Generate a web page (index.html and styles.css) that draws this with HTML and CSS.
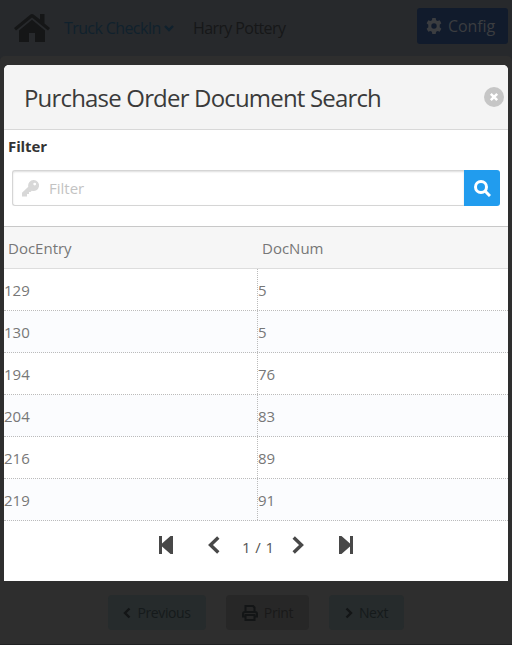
FILE: index.html
```html
<!DOCTYPE html>
<html lang="en">
<head>
<meta charset="utf-8">
<title>Truck CheckIn</title>
<link rel="stylesheet" href="styles.css">
</head>
<body>
<div class="page">
  <header class="topbar">
    <svg class="home" viewBox="0 0 36 28"><path d="M5 16.500 18 5.800l13 10.700V28H21v-9h-6v9H5z"/><path d="M0 14 16.500.6q1.500-1.100 3 0L26 5.500V0h4.500v9.500L36 14l-2 2.500L18 3.500 2 16.500z"/></svg>
    <a class="crumb">Truck CheckIn</a>
    <svg class="caret" viewBox="0 0 10 7"><path d="M1 1l4 4 4-4"/></svg>
    <span class="user">Harry Pottery</span>
    <button class="config"><svg viewBox="0 0 16 16"><path fill-rule="evenodd" d="M6.300 0h3.400l.4 2.200 1.500.9 2.100-.8 1.700 3-1.700 1.400v2.600l1.700 1.400-1.700 3-2.100-.8-1.500.9-.4 2.200H6.300l-.4-2.200-1.500-.9-2.100.8-1.700-3 1.700-1.400V6.700L.6 5.300l1.700-3 2.100.8 1.500-.9zM8 5.300a2.700 2.700 0 100 5.400 2.700 2.700 0 000-5.400z"/></svg><span>Config</span></button>
  </header>
  <main class="panel">
    <div class="actions">
      <button class="btn prev"><svg viewBox="0 0 8 12"><path d="M6.500 1.500 2 6l4.500 4.500"/></svg><span>Previous</span></button>
      <button class="btn print"><svg viewBox="0 0 16 16"><path d="M3.500 7V1h7.500l1.500 1.500V7M3.500 11.500H1V9q0-2 2-2h10q2 0 2 2v2.500h-2.500M3.500 10h9v5h-9z"/></svg><span>Print</span></button>
      <button class="btn next"><svg viewBox="0 0 8 12"><path d="M1.500 1.500 6 6l-4.500 4.500"/></svg><span>Next</span></button>
    </div>
  </main>
</div>
<section class="dialog">
  <div class="dialog-head">
    <h1>Purchase Order Document Search</h1>
    <svg class="close" viewBox="0 0 20 20"><circle cx="10" cy="10" r="10"/><path d="M6.800 6.800l6.400 6.400M13.200 6.800l-6.400 6.400"/></svg>
  </div>
  <div class="filter">
    <label>Filter</label>
    <div class="search">
      <div class="field">
        <svg viewBox="0 0 17 17"><path fill-rule="evenodd" d="M11.500 0a5.500 5.500 0 11-1.700 10.700L8.500 12H7v2H5v2.500H0v-3.700l6.300-6A5.500 5.500 0 0111.500 0zM12.700 2.700a1.400 1.400 0 100 2.800 1.400 1.400 0 000-2.800z"/></svg>
        <span>Filter</span>
      </div>
      <button class="go"><svg viewBox="0 0 17 17"><circle cx="7" cy="7" r="5.500"/><path d="M11 11l5 5"/></svg></button>
    </div>
  </div>
  <div class="table">
    <div class="row head"><span>DocEntry</span><span>DocNum</span></div>
    <div class="row"><span>129</span><span>5</span></div>
    <div class="row"><span>130</span><span>5</span></div>
    <div class="row"><span>194</span><span>76</span></div>
    <div class="row"><span>204</span><span>83</span></div>
    <div class="row"><span>216</span><span>89</span></div>
    <div class="row"><span>219</span><span>91</span></div>
  </div>
  <nav class="pager">
    <svg class="edge" viewBox="0 0 14 18"><path d="M0 0h3v7.500L11.500 0H14v18h-2.500L3 10.500V18H0z"/><path d="M3 9l9-8v16z"/></svg>
    <svg class="step back" viewBox="0 0 12 18"><path d="M10.300 1.500 2.500 9l7.800 7.500"/></svg>
    <span>1 / 1</span>
    <svg class="step fwd" viewBox="0 0 12 18"><path d="M1.700 1.500 9.500 9l-7.800 7.500"/></svg>
    <svg class="edge" viewBox="0 0 14 18"><path d="M14 0h-3v7.500L2.500 0H0v18h2.500L11 10.500V18h3z"/><path d="M11 9L2 1v16z"/></svg>
  </nav>
</section>
</body>
</html>
```
FILE: styles.css
```css
* { box-sizing: border-box; }
body { margin: 0; background: #27292c; font: 15px/20px "Open Sans", "Noto Sans", sans-serif; overflow: hidden; }
button { border: 0; margin: 0; padding: 0; font: inherit; }
svg { display: block; flex: none; }
.page { height: 645px; display: flex; flex-direction: column; }
.topbar { height: 56px; display: flex; align-items: center; padding: 0 4px 0 14px; flex: none; }
.home { width: 36px; height: 28px; fill: #151617; }
.crumb { margin-left: 14px; width: 98px; color: #10212d; font-size: 16px; white-space: nowrap; letter-spacing: -.6px; }
.caret { width: 10px; height: 7px; margin-left: 2px; fill: none; stroke: #10212d; stroke-width: 2.4; }
.user { margin-left: 19px; color: #161718; font-size: 16px; letter-spacing: -.6px; white-space: nowrap; }
.config { margin: -4px 0 0 auto; width: 91px; height: 36px; border-radius: 3px; background: #111b2c; color: #3b3d40; display: flex; align-items: center; padding: 0 0 0 9px; gap: 6px; font-size: 16px; letter-spacing: -.1px; }
.config svg { width: 16px; height: 16px; fill: #3b3d40; }
.panel { flex: 1; background: #2e2e2e; border-bottom: 1px solid #202122; border-radius: 5px 5px 0 0; display: flex; align-items: flex-end; justify-content: center; padding-bottom: 14px; }
.actions { display: flex; gap: 20px; }
.btn { height: 35px; border-radius: 4px; display: flex; align-items: center; justify-content: center; font-size: 14px; letter-spacing: -.4px; color: #151a1b; }
.btn svg { fill: none; stroke: #131516; stroke-width: 2.4; }
.prev { width: 98px; background: #262b2c; gap: 6px; }
.next { width: 75px; background: #262b2c; gap: 6px; }
.print { width: 83px; background: #272727; gap: 6px; color: #191919; }
.prev svg, .next svg { width: 8px; height: 12px; }
.print svg { width: 16px; height: 16px; stroke-width: 2; }
.dialog { position: absolute; left: 4px; top: 65px; width: 504px; height: 516px; background: #fff; border-radius: 5px 5px 0 0; overflow: hidden; color: #777; }
.dialog-head { height: 65px; background: #f4f4f4; border-bottom: 1px solid #d8d8d8; display: flex; align-items: center; justify-content: space-between; padding: 2px 4px 0 20px; }
h1 { margin: 0; font-size: 24px; line-height: 32px; font-weight: 400; color: #3a3a3a; letter-spacing: -.82px; white-space: nowrap; }
.close { width: 20px; height: 20px; margin-top: -2px; fill: #c6c6c6; stroke: none; }
.close path { stroke: #fff; stroke-width: 2.5; }
.filter { height: 96px; padding: 6px 8px 0 4px; }
label { display: block; color: #333; font-weight: 700; height: 20px; letter-spacing: -.1px; }
.search { display: flex; margin: 14px 0 0 4px; height: 36px; }
.field { flex: 1; display: flex; align-items: center; gap: 10px; padding-left: 9px; border: 1px solid #d5d5d5; border-right: 0; border-radius: 3px 0 0 3px; box-shadow: inset 0 1px 2px #ddd; color: #c3c3c3; }
.field svg { width: 17px; height: 17px; fill: #d8d8d8; }
.go { width: 36px; background: #219cee; border-radius: 0 3px 3px 0; display: grid; place-items: center; }
.go svg { width: 17px; height: 17px; fill: none; stroke: #fff; stroke-width: 3; }
.row { height: 42px; display: grid; grid-template-columns: 253px 1fr; border-bottom: 1px dotted #bbb; }
.row span { padding-top: 11px; }
.row span + span { border-left: 1px dotted #bbb; }
.row:nth-child(odd) { background: #fbfcfe; }
.row.head { height: 43px; background: #f6f6f6; border-top: 1px solid #c8c8c8; border-bottom: 1px solid #ddd; }
.row.head span { padding-left: 4px; border-left: 0; }
.row.head span + span { padding-left: 5px; }
.pager { display: flex; padding: 15px 0 0 155px; color: #555; }
.pager span { width: 32px; margin: 1px 18px 0 22px; white-space: nowrap; letter-spacing: .4px; }
.edge { width: 14px; height: 18px; fill: #484848; }
.step { width: 12px; height: 18px; fill: none; stroke: #484848; stroke-width: 3.4; }
.back { margin-left: 35px; }
.fwd { margin-right: 35px; }
```
